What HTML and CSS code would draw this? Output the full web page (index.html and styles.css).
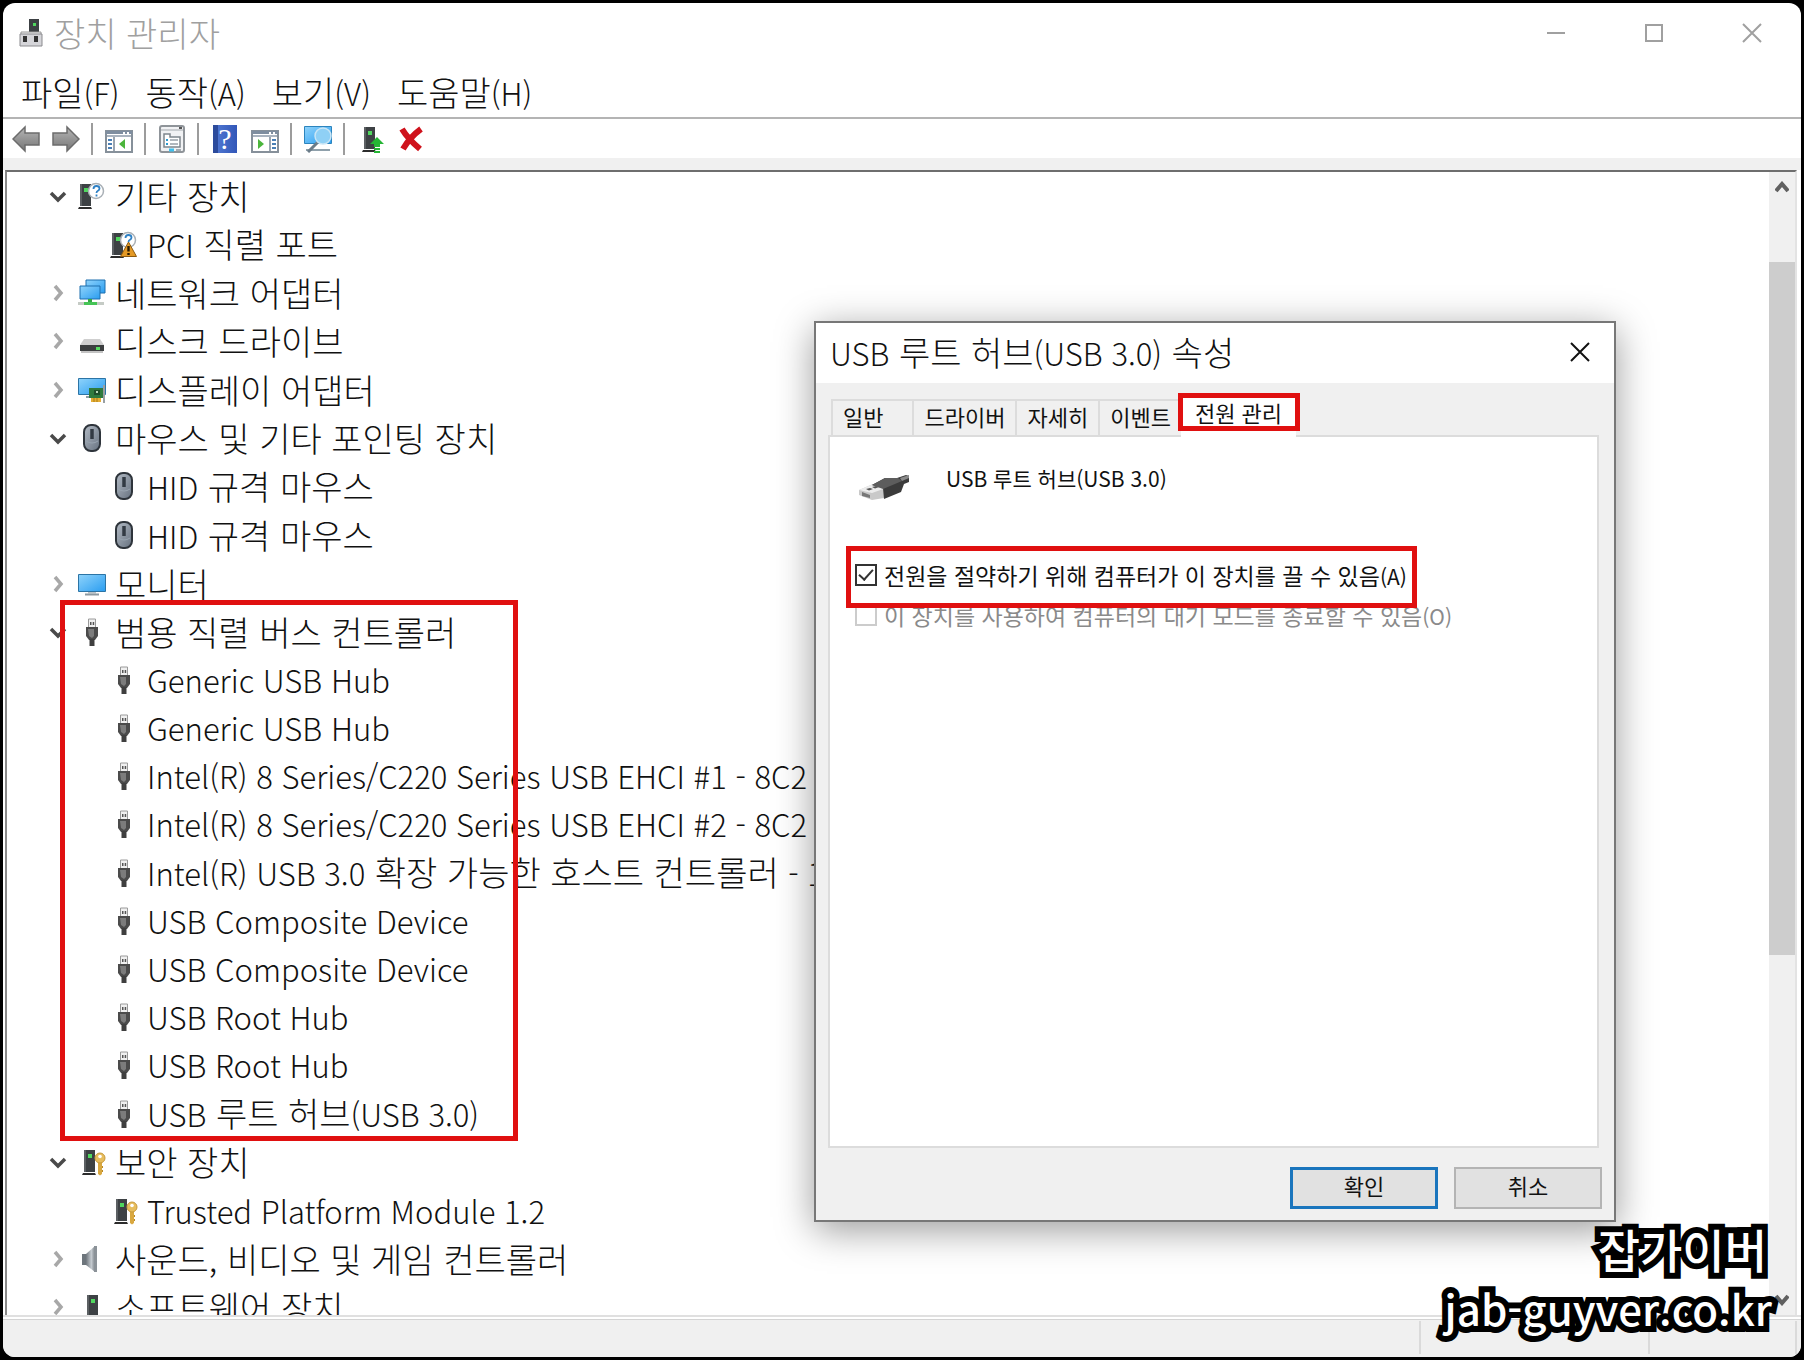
FILE: index.html
```html
<!DOCTYPE html>
<html lang="ko">
<head>
  <meta charset="UTF-8" />
  <meta name="viewport" content="width=device-width, initial-scale=1.0" />
  <title>장치 관리자</title>
  <link rel="stylesheet" href="styles.css">
</head>
<body>
  <!-- shared icons -->
  <svg class="sprite" aria-hidden="true">
    <defs>
      <linearGradient id="blue" x1="0" y1="0" x2="1" y2="1">
        <stop offset="0" stop-color="#8fd3fb" />
        <stop offset="1" stop-color="#2a9df0" />
      </linearGradient>
      <linearGradient id="grey" x1="0" y1="0" x2="0" y2="1">
        <stop offset="0" stop-color="#b5b5b5" />
        <stop offset="1" stop-color="#767676" />
      </linearGradient>
      <linearGradient id="mouseBody" x1="0" y1="0" x2="1" y2="1">
        <stop offset="0" stop-color="#b4bcc6" />
        <stop offset="1" stop-color="#66717f" />
      </linearGradient>
      <linearGradient id="cone" x1="0" y1="0" x2="1" y2="0">
        <stop offset="0" stop-color="#6f767d" />
        <stop offset="0.6" stop-color="#c5cbd0" />
        <stop offset="1" stop-color="#7d848a" />
      </linearGradient>
    </defs>

    <symbol id="down" viewBox="0 0 18 18">
      <path d="M2 6l7 7 7-7" fill="none" stroke="#4a4a4a" stroke-width="3.500" />
    </symbol>
    <symbol id="right" viewBox="0 0 18 18">
      <path d="M6 2l6 7-6 7" fill="none" stroke="#a8a8a8" stroke-width="3.500" />
    </symbol>
    <symbol id="tower" viewBox="0 0 28 28">
      <path d="M2 2h11v22H2z" fill="#3d4144" />
      <path d="M2 2h2v22H2z" fill="#5c6063" />
      <path d="M1 25h12l1 2H0z" fill="#2c2c2c" />
      <path d="M6 6h4v4H6z" fill="#50d75e" />
    </symbol>
    <symbol id="other" viewBox="0 0 28 28">
      <use href="#tower" width="28" height="28" />
      <circle cx="18" cy="9" r="7.500" fill="#fff" stroke="#a9b0b6" stroke-width="1.5" />
      <path d="M15.500 7q0-3 3-3t3 2.500q0 1.500-1.500 2.300T18.500 11M18.500 12.500v2" fill="none" stroke="#2f81c5" stroke-width="1.800" />
    </symbol>
    <symbol id="warn" viewBox="0 0 28 28">
      <use href="#other" width="28" height="28" />
      <path d="M18.500 11l8 14.500h-16z" fill="#e59a25" stroke="#8d5a10" stroke-width="1" />
      <path d="M18.500 15v5.500M18.500 22v2" stroke="#2b1b00" stroke-width="2.400" />
    </symbol>
    <symbol id="network" viewBox="0 0 28 28">
      <path d="M8 1h19v13H8z" fill="url(#blue)" stroke="#1d6fae" />
      <path d="M2 7h20v13H2z" fill="url(#blue)" stroke="#1d6fae" />
      <path d="M10 20h4v3h-4z" fill="#35a845" />
      <path d="M0 23h26v3H0z" fill="#c5cbc5" />
      <path d="M6 23h13v3H6z" fill="#45c455" />
    </symbol>
    <symbol id="disk" viewBox="0 0 28 28">
      <path d="M6 12h16l4 6H2z" fill="#cfcfcf" />
      <path d="M2 18h24v6H2z" fill="#3c3f40" />
      <path d="M3 25h22" stroke="#888" />
      <path d="M18 20h4v3h-4z" fill="#55dd60" />
    </symbol>
    <symbol id="display" viewBox="0 0 28 28">
      <path d="M0.500 2.500h27v16H.5z" fill="url(#blue)" stroke="#2c74a5" />
      <path d="M8 21h8" stroke="#8b9aa5" stroke-width="2" />
      <path d="M11 12h14v10H11z" fill="#2f7a3e" />
      <path d="M16 14h6v5h-6z" fill="#1f4f2b" />
      <path d="M18 15h2v2h-2z" fill="#b9d9ba" />
      <path d="M26 9v18" stroke="#9aa0a3" stroke-width="2" />
      <path d="M13 22h10v4H13z" fill="#e5ae35" />
      <path d="M16 22v4M19 22v4" stroke="#a97a17" />
    </symbol>
    <symbol id="mouse" viewBox="0 0 28 28">
      <rect x="6" y="1" width="16" height="26" rx="7" fill="url(#mouseBody)" stroke="#2e343b" stroke-width="2" />
      <path d="M14 5v10" stroke="#323a43" stroke-width="3.500" />
      <path d="M8 17q6 4 12 0" fill="none" stroke="#98a4b0" stroke-width="1" />
    </symbol>
    <symbol id="monitor" viewBox="0 0 28 28">
      <path d="M0.500 4.500h27v17H.5z" fill="url(#blue)" stroke="#2c74a5" />
      <path d="M10 22h8v1.500h-8z" fill="#b9c2c8" />
      <path d="M7 24.500h14" stroke="#8d99a1" stroke-width="2" />
    </symbol>
    <symbol id="usb" viewBox="0 0 28 28">
      <path d="M10.500 1h7v9h-7z" fill="#f0f0f0" stroke="#9a9a9a" />
      <path d="M12 4h1.500v3H12zM14.700 4h1.500v3h-1.500z" fill="#555" />
      <path d="M8 9h12v9l-3 4H11l-3-4z" fill="#4b4b4b" />
      <path d="M10 11h6v7l-2 2-3-2z" fill="#7c7c7c" />
      <path d="M11.500 21h5v7h-5z" fill="#3f3f3f" />
    </symbol>
    <symbol id="security" viewBox="0 0 28 28">
      <use href="#tower" x="4" width="28" height="28" />
      <path d="M20 13h4v13l-2 1.500-2-1.500z" fill="#d9a840" />
      <circle cx="22" cy="10" r="5" fill="#e7bd5d" stroke="#c79a3c" />
      <circle cx="22" cy="8.500" r="1.800" fill="#fff" />
      <path d="M24 18h1v2h-1zM24 22h1v2h-1z" fill="#b98826" />
    </symbol>
    <symbol id="sound" viewBox="0 0 28 28">
      <path d="M4 9h5v11H4z" fill="#6d757c" />
      <path d="M8 9L17 1v26L8 20z" fill="url(#cone)" />
      <path d="M16 1h3v26h-3z" fill="#8b9298" />
    </symbol>
    <symbol id="software" viewBox="0 0 28 28">
      <path d="M9 2h11v22H9z" fill="#3d4144" />
      <path d="M9 2h2v22H9z" fill="#5c6063" />
      <path d="M7 24h15v3H7z" fill="#2c2c2c" />
      <path d="M13 6h4v4h-4z" fill="#50d75e" />
    </symbol>
    <symbol id="close" viewBox="0 0 20 20">
      <path d="M1 1l18 18M19 1L1 19" fill="none" stroke="currentColor" stroke-width="2" />
    </symbol>
    <symbol id="pane" viewBox="0 0 28 28">
      <path d="M1 6h26v21H1z" fill="#fff" stroke="#86909a" stroke-width="2" />
      <path d="M1 6h26v3H1z" fill="#7f8ea0" />
      <path d="M2 11h24" stroke="#a9b3bf" stroke-width="2" />
      <path d="M18 8h2M22 8h2" stroke="#fff" stroke-width="2" />
    </symbol>
  </svg>

  <main class="window">
    <header class="titlebar">
      <svg class="app-icon" viewBox="0 0 24 30">
        <path d="M10 1h10v14H10z" fill="#3c4043" />
        <path d="M14 5h3v3h-3z" fill="#50d75e" />
        <path d="M2 14h20v3H2z" fill="#eee" stroke="#999" />
        <path d="M1 16h22v12H1z" fill="#d5d5d9" stroke="#8b8b8f" />
        <path d="M4 18h4v6H4zM15 18h4v6h-4z" fill="#333" />
      </svg>
      <h1>장치 관리자</h1>
      <div class="window-buttons">
        <button aria-label="최소화"><svg viewBox="0 0 20 20"><path d="M1 10h18" stroke="currentColor" stroke-width="2" /></svg></button>
        <button aria-label="최대화"><svg viewBox="0 0 20 20"><path d="M2 2h16v16H2z" fill="none" stroke="currentColor" stroke-width="2" /></svg></button>
        <button aria-label="닫기"><svg><use href="#close" /></svg></button>
      </div>
    </header>

    <nav class="menu">
      <button>파일<span class="en">(F)</span></button>
      <button>동작<span class="en">(A)</span></button>
      <button>보기<span class="en">(V)</span></button>
      <button>도움말<span class="en">(H)</span></button>
    </nav>

    <div class="toolbar">
      <button aria-label="뒤로"><svg viewBox="0 0 28 28"><path d="M1 14L13 2v6h14v12H13v6z" fill="url(#grey)" stroke="#6c6c6c" stroke-width="1.500" /></svg></button>
      <button aria-label="앞으로"><svg viewBox="0 0 28 28"><path d="M27 14L15 2v6H1v12h14v6z" fill="url(#grey)" stroke="#6c6c6c" stroke-width="1.500" /></svg></button>
      <span class="divider"></span>
      <button aria-label="콘솔 트리 표시"><svg viewBox="0 0 28 28">
        <use href="#pane" width="28" height="28" />
        <path d="M3 15h4M3 19h4M3 23h4" stroke="#4a7fb5" stroke-width="2" />
        <path d="M9 12v14" stroke="#9aa5b1" stroke-width="2" />
        <path d="M20 14v10l-6-5z" fill="#4bb53c" />
      </svg></button>
      <span class="divider"></span>
      <button aria-label="속성"><svg viewBox="0 0 28 28">
        <rect x="2" y="1" width="24" height="26" rx="2" fill="#f1f2f4" stroke="#8f9499" stroke-width="2" />
        <path d="M3 5h22" stroke="#a4a9ae" stroke-width="1" />
        <path d="M21 3h3" stroke="#555" stroke-width="2" />
        <path d="M6 9h6v3h10v10H6z" fill="#fff" stroke="#7e868d" stroke-width="1.500" />
        <path d="M8 15h2M8 19h2" stroke="#2d9ad0" stroke-width="2" />
        <path d="M12 15h8M12 19h8" stroke="#98a0a8" stroke-width="1.500" />
        <path d="M11 25h5" stroke="#3fc0ee" stroke-width="3" /><path d="M18 25h5" stroke="#a5acb2" stroke-width="2" />
      </svg></button>
      <span class="divider"></span>
      <button class="help" aria-label="도움말">?</button>
      <button aria-label="작업 창 표시"><svg viewBox="0 0 28 28">
        <use href="#pane" width="28" height="28" />
        <path d="M21 15h4M21 19h4M21 23h4" stroke="#4a7fb5" stroke-width="2" />
        <path d="M19 12v14" stroke="#9aa5b1" stroke-width="2" />
        <path d="M7 14v10l6-5z" fill="#4bb53c" />
      </svg></button>
      <span class="divider"></span>
      <button aria-label="하드웨어 변경 사항 검색"><svg viewBox="0 0 28 28">
        <path d="M.5 1.500h27v17H.5z" fill="url(#blue)" stroke="#2c84bd" />
        <path d="M2 25h24" stroke="#8fa0ab" stroke-width="2" />
        <path d="M14 17L4 27" stroke="#6b7c89" stroke-width="3" />
        <circle cx="19" cy="11" r="8" fill="#8fd0f5" stroke="#c9e5f5" stroke-width="1.500" />
      </svg></button>
      <span class="divider"></span>
      <button aria-label="드라이버 업데이트"><svg viewBox="0 0 28 28">
        <use href="#tower" x="5" width="28" height="28" />
        <path d="M20 12l7 7h-4v3h-6v-3h-4z" fill="#25b534" />
        <path d="M17 23h6v2h-6zM17 26h6v2h-6z" fill="#25b534" />
      </svg></button>
      <button aria-label="장치 제거"><svg viewBox="0 0 28 28"><path d="M5 4q6 10 18 20M24 4Q13 12 6 24" fill="none" stroke="#cf121c" stroke-width="6" /></svg></button>
    </div>

    <section class="content">
      <ul class="tree">
        <li class="row"><button class="toggle" aria-label="접기"><svg><use href="#down" /></svg></button><svg class="icon"><use href="#other" /></svg>기타 장치</li>
        <li class="row child"><svg class="icon"><use href="#warn" /></svg><span><span class="en">PCI</span> 직렬 포트</span></li>
        <li class="row"><button class="toggle" aria-label="펼치기"><svg><use href="#right" /></svg></button><svg class="icon"><use href="#network" /></svg>네트워크 어댑터</li>
        <li class="row"><button class="toggle" aria-label="펼치기"><svg><use href="#right" /></svg></button><svg class="icon"><use href="#disk" /></svg>디스크 드라이브</li>
        <li class="row"><button class="toggle" aria-label="펼치기"><svg><use href="#right" /></svg></button><svg class="icon"><use href="#display" /></svg>디스플레이 어댑터</li>
        <li class="row"><button class="toggle" aria-label="접기"><svg><use href="#down" /></svg></button><svg class="icon"><use href="#mouse" /></svg>마우스 및 기타 포인팅 장치</li>
        <li class="row child"><svg class="icon"><use href="#mouse" /></svg><span><span class="en">HID</span> 규격 마우스</span></li>
        <li class="row child"><svg class="icon"><use href="#mouse" /></svg><span><span class="en">HID</span> 규격 마우스</span></li>
        <li class="row"><button class="toggle" aria-label="펼치기"><svg><use href="#right" /></svg></button><svg class="icon"><use href="#monitor" /></svg>모니터</li>
        <li class="usb-group">
          <div class="row"><button class="toggle" aria-label="접기"><svg><use href="#down" /></svg></button><svg class="icon"><use href="#usb" /></svg>범용 직렬 버스 컨트롤러</div>
          <div class="row child"><svg class="icon"><use href="#usb" /></svg><span class="en">Generic USB Hub</span></div>
          <div class="row child"><svg class="icon"><use href="#usb" /></svg><span class="en">Generic USB Hub</span></div>
          <div class="row child"><svg class="icon"><use href="#usb" /></svg><span class="en">Intel(R) 8 Series/C220 Series USB EHCI #1 - 8C2</span></div>
          <div class="row child"><svg class="icon"><use href="#usb" /></svg><span class="en">Intel(R) 8 Series/C220 Series USB EHCI #2 - 8C2</span></div>
          <div class="row child"><svg class="icon"><use href="#usb" /></svg><span><span class="en">Intel(R) USB 3.0</span> 확장 가능한 호스트 컨트롤러 <span class="en">- 1</span></span></div>
          <div class="row child"><svg class="icon"><use href="#usb" /></svg><span class="en">USB Composite Device</span></div>
          <div class="row child"><svg class="icon"><use href="#usb" /></svg><span class="en">USB Composite Device</span></div>
          <div class="row child"><svg class="icon"><use href="#usb" /></svg><span class="en">USB Root Hub</span></div>
          <div class="row child"><svg class="icon"><use href="#usb" /></svg><span class="en">USB Root Hub</span></div>
          <div class="row child"><svg class="icon"><use href="#usb" /></svg><span><span class="en">USB</span> 루트 허브<span class="en">(USB 3.0)</span></span></div>
        </li>
        <li class="row"><button class="toggle" aria-label="접기"><svg><use href="#down" /></svg></button><svg class="icon"><use href="#security" /></svg>보안 장치</li>
        <li class="row child"><svg class="icon"><use href="#security" /></svg><span class="en">Trusted Platform Module 1.2</span></li>
        <li class="row"><button class="toggle" aria-label="펼치기"><svg><use href="#right" /></svg></button><svg class="icon"><use href="#sound" /></svg>사운드, 비디오 및 게임 컨트롤러</li>
        <li class="row"><button class="toggle" aria-label="펼치기"><svg><use href="#right" /></svg></button><svg class="icon"><use href="#software" /></svg>소프트웨어 장치</li>
      </ul>
      <div class="scrollbar">
        <button aria-label="위로 스크롤"><svg viewBox="0 0 14 12"><path d="M1 10l6-7 6 7" fill="none" stroke="#606060" stroke-width="4" /></svg></button>
        <div class="track"><div class="thumb"></div></div>
        <button aria-label="아래로 스크롤"><svg viewBox="0 0 14 12"><path d="M1 2l6 7 6-7" fill="none" stroke="#606060" stroke-width="4" /></svg></button>
      </div>
    </section>

    <footer class="statusbar">
      <span class="status-main"></span>
      <span class="status-wide"></span>
      <span class="status-small"></span>
    </footer>
  </main>

  <section class="dialog" role="dialog" aria-labelledby="dialogTitle">
    <header class="dialog-title">
      <h2 id="dialogTitle"><span class="en">USB</span> 루트 허브<span class="en">(USB 3.0)</span> 속성</h2>
      <button aria-label="닫기"><svg><use href="#close" /></svg></button>
    </header>
    <div class="tabs" role="tablist">
      <button role="tab" class="tab wide">일반</button>
      <button role="tab" class="tab">드라이버</button>
      <button role="tab" class="tab">자세히</button>
      <button role="tab" class="tab">이벤트</button>
      <button role="tab" class="tab active" aria-selected="true">전원 관리</button>
    </div>
    <div class="panel">
      <div class="device">
        <svg viewBox="0 0 52 28">
          <path d="M1 17l14-6 13 4-2 10-12 2L1 22z" fill="#c9c9c9" />
          <path d="M1 17l14-6 13 4-14 5z" fill="#ececec" />
          <path d="M4 19l8 3v3l-8-2z" fill="#777" />
          <path d="M8 16l4-1 3 1-4 1.500zM14 14l4-1 3 1-4 1.500z" fill="#555" />
          <path d="M14 12L27 5l12 0 9-3 3 1v6l-5 2-3 8-17 7-1-11z" fill="#3b3b3b" />
          <path d="M14 12L27 5h13l4 3-19 8z" fill="#5d5d5d" />
          <path d="M42 5l9-3v3l-7 3z" fill="#8a8a8a" />
        </svg>
        <span>USB 루트 허브(USB 3.0)</span>
      </div>
      <label class="option marked"><input type="checkbox" checked><span>전원을 절약하기 위해 컴퓨터가 이 장치를 끌 수 있음<span class="key">(A)</span></span></label>
      <label class="option disabled"><input type="checkbox" disabled><span>이 장치를 사용하여 컴퓨터의 대기 모드를 종료할 수 있음<span class="key">(O)</span></span></label>
    </div>
    <div class="actions">
      <button class="primary">확인</button>
      <button>취소</button>
    </div>
  </section>

  <div class="watermark">
    <p>잡가이버</p>
    <p class="site">jab-guyver.co.kr</p>
  </div>
</body>
</html>
```
FILE: styles.css
```css
* {
  box-sizing: border-box;
}
body {
  margin: 0;
  height: 100vh;
  padding: 3px;
  background: #000;
  color: #111;
  font-family: "Noto Sans CJK KR", sans-serif;
  font-size: 34px;
  font-weight: 300;
  line-height: 48px;
  overflow: hidden;
  position: relative;
}
h1, h2, p, ul {
  margin: 0;
  padding: 0;
  font-size: inherit;
  font-weight: inherit;
}
button {
  padding: 0;
  border: none;
  background: none;
  color: inherit;
  font: inherit;
}
svg {
  display: block;
}
.sprite {
  position: absolute;
  width: 0;
  height: 0;
}
/* latin text is set a bit smaller than the hangul */
.en {
  font-size: 31px;
}
.key {
  font-size: 21px;
}

/* main window */
.window {
  height: 100%;
  display: flex;
  flex-direction: column;
  background: #fff;
  border-radius: 12px;
  overflow: hidden;
}
.titlebar {
  display: flex;
  align-items: center;
  height: 62px;
  padding: 0 0 2px 16px;
  color: #a0a0a0;
}
.app-icon {
  width: 24px;
  height: 30px;
  margin-right: 11px;
}
.window-buttons {
  display: flex;
  margin-left: auto;
}
.window-buttons button {
  width: 98px;
  height: 60px;
  display: flex;
  align-items: center;
  justify-content: center;
}
.window-buttons svg,
.dialog-title svg {
  width: 20px;
  height: 20px;
}
.menu {
  display: flex;
  gap: 26px;
  height: 54px;
  padding: 3px 18px;
  border-bottom: 2px solid #b4b4b4;
}
.toolbar {
  display: flex;
  align-items: center;
  gap: 12px;
  height: 39px;
  padding-left: 9px;
}
.toolbar svg {
  width: 28px;
  height: 28px;
}
.toolbar .divider {
  width: 2px;
  height: 32px;
  margin-left: -1px;
  background: #9c9c9c;
}
.toolbar .help {
  width: 24px;
  height: 28px;
  margin: 0 2px;
  background: linear-gradient(90deg, #2c4b9c 20%, #4d74cf 20%, #3257b8);
  color: #fff;
  font-family: "Liberation Serif", serif;
  font-size: 30px;
  line-height: 28px;
}
.content {
  flex: 1;
  min-height: 0;
  display: flex;
  border-top: 12px solid #f0f0f0;
  position: relative;
  padding: 2px 4px 0;
}
.content::before {
  content: "";
  position: absolute;
  inset: 0 4px 0 2px;
  border-top: 2px solid #6e6e6e;
  border-left: 2px solid #8a8a8a;
  border-right: 2px solid #e3e3e3;
  pointer-events: none;
}
.tree {
  flex: 1;
  /* the last row runs under the status bar */
  height: calc(100% + 16px);
  display: flex;
  flex-direction: column;
  list-style: none;
  padding-left: 42px;
}
.row {
  flex: 1;
  display: flex;
  align-items: center;
  white-space: nowrap;
}
.row.child {
  padding-left: 61px;
}
.usb-group {
  flex: 11;
  display: flex;
  flex-direction: column;
  position: relative;
}
.usb-group::after {
  content: "";
  position: absolute;
  top: -8px;
  bottom: -3px;
  left: 11px;
  width: 448px;
  border: 5px solid #e01010;
}
.toggle svg {
  width: 18px;
  height: 18px;
}
.toggle {
  margin-right: 11px;
}
.icon {
  width: 28px;
  height: 28px;
  margin-right: 9px;
}
.scrollbar {
  width: 28px;
  display: flex;
  flex-direction: column;
  background: #f0f0f0;
  padding-right: 2px;
}
.scrollbar button {
  height: 30px;
  display: flex;
  align-items: center;
  justify-content: center;
}
.scrollbar svg {
  width: 14px;
  height: 12px;
}
.track {
  flex: 1;
  padding: 60px 0 4px;
}
.thumb {
  height: 68%;
  background: #cdcdcd;
}
.statusbar {
  display: flex;
  height: 42px;
  padding: 4px 4px 3px 0;
  background: #f0f0f0;
  border-top: 2px solid #e0e0e0;
  box-shadow: inset 0 2px #fff, inset 0 3px #d4d4d4;
  position: relative;
}
.statusbar span {
  border-right: 2px solid #dadada;
}
.status-main {
  flex: 1;
}
.status-wide {
  width: 229px;
}
.status-small {
  width: 147px;
}

/* properties dialog */
.dialog {
  position: absolute;
  top: 321px;
  left: 814px;
  width: 802px;
  height: 901px;
  display: flex;
  flex-direction: column;
  background: #f0f0f0;
  border: 2px solid #777;
  box-shadow: 0 8px 36px rgba(0, 0, 0, 0.4);
  font-size: 22px;
  font-weight: 400;
  line-height: 30px;
}
.dialog-title {
  display: flex;
  align-items: center;
  justify-content: space-between;
  height: 60px;
  padding: 0 24px 2px 14px;
  background: #fff;
  font-size: 34px;
  font-weight: 300;
  line-height: 48px;
}
.tabs {
  display: flex;
  align-items: flex-end;
  height: 52px;
  padding-left: 15px;
}
.tab {
  height: 36px;
  padding: 0 10px 4px;
  border: 2px solid #dcdcdc;
  border-bottom: none;
  border-right: none;
}
.tab.wide {
  padding-right: 29px;
}
.tab.active {
  position: relative;
  height: 42px;
  margin-bottom: -2px;
  padding: 0 14px 8px;
  background: #fff;
  border: none;
}
.tab.active::after {
  content: "";
  position: absolute;
  inset: -2px -4px 6px -3px;
  border: 5px solid #e01010;
}
.panel {
  flex: 1;
  margin: 0 15px 0 12px;
  padding: 26px 14px;
  background: #fff;
  border: 2px solid #dcdcdc;
}
.device {
  display: flex;
  gap: 36px;
  padding-left: 14px;
  font-size: 21px;
}
.device svg {
  width: 52px;
  height: 28px;
  margin-top: 10px;
}
.option {
  display: flex;
  align-items: center;
  gap: 7px;
  height: 40px;
  padding-left: 11px;
  font-size: 23px;
  white-space: nowrap;
}
.option input {
  appearance: none;
  width: 22px;
  height: 22px;
  margin: 0;
  border: 2px solid #333;
  background: #fff;
}
.option input:checked::after {
  content: "";
  display: block;
  width: 6px;
  height: 12px;
  margin-left: 5px;
  border: solid #333;
  border-width: 0 2px 2px 0;
  transform: rotate(42deg);
}
.option.marked {
  position: relative;
  width: 573px;
  margin-top: 54px;
}
.option.marked::after {
  content: "";
  position: absolute;
  inset: -9px 0 -13px 2px;
  border: 5px solid #e01010;
}
.option.disabled {
  color: #8a8a8a;
}
.option.disabled input {
  border-color: #ccc;
}
.actions {
  display: flex;
  justify-content: flex-end;
  gap: 16px;
  padding: 19px 12px 11px;
}
.actions button {
  width: 148px;
  height: 42px;
  padding-bottom: 6px;
  background: #e1e1e1;
  border: 2px solid #b4b4b4;
}
.actions .primary {
  border: 3px solid #1a75bd;
}

/* blog signature */
.watermark {
  position: absolute;
  right: 32px;
  bottom: 22px;
  color: #fff;
  font-size: 46px;
  font-weight: 500;
  line-height: 60px;
  text-align: right;
  -webkit-text-stroke: 12px #000;
  paint-order: stroke fill;
  stroke-linejoin: round;
}
.watermark p {
  padding-right: 5px;
}
.watermark .site {
  padding-right: 0;
  font-size: 42px;
}
```
